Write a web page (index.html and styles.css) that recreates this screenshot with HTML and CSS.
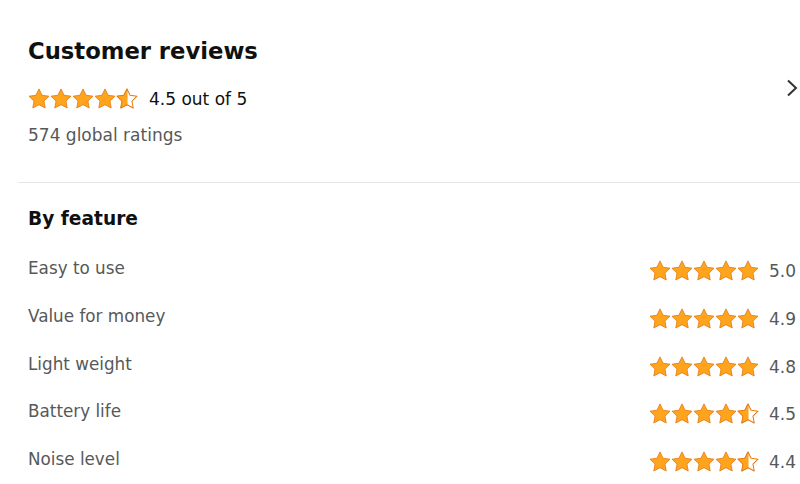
FILE: index.html
```html
<!DOCTYPE html>
<html lang="en">
<head>
<meta charset="utf-8">
<title>Customer reviews</title>
<link rel="stylesheet" href="styles.css">
</head>
<body>
<svg class="defs" width="0" height="0" aria-hidden="true">
  <defs>
    <path id="star-shape" d="M12 1 L15.35 7.9 L22.94 8.95 L17.41 14.26 L18.76 21.8 L12 18.2 L5.24 21.8 L6.59 14.26 L1.06 8.95 L8.65 7.9 Z"/>
    <clipPath id="half-clip"><rect x="0" y="0" width="12.6" height="24"/></clipPath>
  </defs>
</svg>
<main class="page">
  <section class="summary">
    <div class="summary-text">
      <h2 class="title">Customer reviews</h2>
      <div class="overall">
        <span class="stars">
          <svg class="star" viewBox="0 0 24 24"><use href="#star-shape" class="fill"/></svg>
          <svg class="star" viewBox="0 0 24 24"><use href="#star-shape" class="fill"/></svg>
          <svg class="star" viewBox="0 0 24 24"><use href="#star-shape" class="fill"/></svg>
          <svg class="star" viewBox="0 0 24 24"><use href="#star-shape" class="fill"/></svg>
          <svg class="star" viewBox="0 0 24 24"><use href="#star-shape" class="empty"/><use href="#star-shape" class="fill" clip-path="url(#half-clip)"/></svg>
        </span>
        <span class="overall-label">4.5 out of 5</span>
      </div>
      <p class="count">574 global ratings</p>
    </div>
    <svg class="chevron" viewBox="0 0 12 18"><polyline points="2,1.5 10,9 2,16.5"/></svg>
  </section>
  <hr class="divider">
  <section class="features">
    <h3 class="features-title">By feature</h3>
    <ul class="feature-list">
      <li class="feature">
        <span class="feature-name">Easy to use</span>
        <span class="feature-rating">
          <span class="stars">
            <svg class="star" viewBox="0 0 24 24"><use href="#star-shape" class="fill"/></svg>
            <svg class="star" viewBox="0 0 24 24"><use href="#star-shape" class="fill"/></svg>
            <svg class="star" viewBox="0 0 24 24"><use href="#star-shape" class="fill"/></svg>
            <svg class="star" viewBox="0 0 24 24"><use href="#star-shape" class="fill"/></svg>
            <svg class="star" viewBox="0 0 24 24"><use href="#star-shape" class="fill"/></svg>
          </span>
          <span class="score">5.0</span>
        </span>
      </li>
      <li class="feature">
        <span class="feature-name">Value for money</span>
        <span class="feature-rating">
          <span class="stars">
            <svg class="star" viewBox="0 0 24 24"><use href="#star-shape" class="fill"/></svg>
            <svg class="star" viewBox="0 0 24 24"><use href="#star-shape" class="fill"/></svg>
            <svg class="star" viewBox="0 0 24 24"><use href="#star-shape" class="fill"/></svg>
            <svg class="star" viewBox="0 0 24 24"><use href="#star-shape" class="fill"/></svg>
            <svg class="star" viewBox="0 0 24 24"><use href="#star-shape" class="fill"/></svg>
          </span>
          <span class="score">4.9</span>
        </span>
      </li>
      <li class="feature">
        <span class="feature-name">Light weight</span>
        <span class="feature-rating">
          <span class="stars">
            <svg class="star" viewBox="0 0 24 24"><use href="#star-shape" class="fill"/></svg>
            <svg class="star" viewBox="0 0 24 24"><use href="#star-shape" class="fill"/></svg>
            <svg class="star" viewBox="0 0 24 24"><use href="#star-shape" class="fill"/></svg>
            <svg class="star" viewBox="0 0 24 24"><use href="#star-shape" class="fill"/></svg>
            <svg class="star" viewBox="0 0 24 24"><use href="#star-shape" class="fill"/></svg>
          </span>
          <span class="score">4.8</span>
        </span>
      </li>
      <li class="feature">
        <span class="feature-name">Battery life</span>
        <span class="feature-rating">
          <span class="stars">
            <svg class="star" viewBox="0 0 24 24"><use href="#star-shape" class="fill"/></svg>
            <svg class="star" viewBox="0 0 24 24"><use href="#star-shape" class="fill"/></svg>
            <svg class="star" viewBox="0 0 24 24"><use href="#star-shape" class="fill"/></svg>
            <svg class="star" viewBox="0 0 24 24"><use href="#star-shape" class="fill"/></svg>
            <svg class="star" viewBox="0 0 24 24"><use href="#star-shape" class="empty"/><use href="#star-shape" class="fill" clip-path="url(#half-clip)"/></svg>
          </span>
          <span class="score">4.5</span>
        </span>
      </li>
      <li class="feature">
        <span class="feature-name">Noise level</span>
        <span class="feature-rating">
          <span class="stars">
            <svg class="star" viewBox="0 0 24 24"><use href="#star-shape" class="fill"/></svg>
            <svg class="star" viewBox="0 0 24 24"><use href="#star-shape" class="fill"/></svg>
            <svg class="star" viewBox="0 0 24 24"><use href="#star-shape" class="fill"/></svg>
            <svg class="star" viewBox="0 0 24 24"><use href="#star-shape" class="fill"/></svg>
            <svg class="star" viewBox="0 0 24 24"><use href="#star-shape" class="empty"/><use href="#star-shape" class="fill" clip-path="url(#half-clip)"/></svg>
          </span>
          <span class="score">4.4</span>
        </span>
      </li>
    </ul>
  </section>
</main>
</body>
</html>
```
FILE: styles.css
```css
* { box-sizing: border-box; }
html, body {
  margin: 0;
  padding: 0;
  background: #ffffff;
}
body {
  font-family: "DejaVu Sans", "Liberation Sans", sans-serif;
  color: #0f1111;
  width: 800px;
  height: 484px;
  overflow: hidden;
}
.defs {
  position: absolute;
  width: 0;
  height: 0;
}
.page {
  padding: 36px 0 0 18px;
}
.summary {
  display: flex;
  justify-content: space-between;
  align-items: flex-start;
  padding: 0 2px 0 10px;
}
.summary-text {
  display: flex;
  flex-direction: column;
}
.title {
  margin: 0;
  font-size: 22.7px;
  line-height: 30px;
  font-weight: bold;
  color: #0f1111;
}
.overall {
  display: flex;
  align-items: center;
  height: 24px;
  margin-top: 21px;
  gap: 11px;
}
.overall-label {
  font-size: 17px;
  line-height: 24px;
  color: #0f1111;
}
.count {
  margin: 12px 0 0;
  font-size: 17px;
  line-height: 24px;
  color: #565959;
}
.chevron {
  width: 12px;
  height: 18px;
  margin-top: 43px;
  fill: none;
  stroke: #333333;
  stroke-width: 2;
}
.stars {
  display: inline-flex;
  align-items: center;
}
.star {
  width: 22px;
  height: 22px;
  display: block;
}
.star .fill {
  fill: #ffa41c;
  stroke: #e47911;
  stroke-width: 0.9;
  stroke-linejoin: round;
}
.star .empty {
  fill: #ffffff;
  stroke: #e47911;
  stroke-width: 1.1;
  stroke-linejoin: round;
}
.divider {
  margin: 35px 0 0;
  border: 0;
  border-top: 1px solid #e7e7e7;
  height: 0;
}
.features {
  padding: 22px 4px 0 10px;
}
.features-title {
  margin: 0;
  font-size: 18.6px;
  line-height: 28px;
  font-weight: bold;
  color: #0f1111;
}
.feature-list {
  list-style: none;
  margin: 23px 0 0;
  padding: 0;
}
.feature {
  display: flex;
  justify-content: space-between;
  align-items: flex-start;
  height: 47.75px;
}
.feature-name {
  font-size: 16.8px;
  line-height: 24px;
  color: #565959;
}
.feature-rating {
  display: flex;
  align-items: center;
  gap: 10px;
  margin-top: 3px;
  height: 24px;
}
.score {
  font-size: 17px;
  line-height: 24px;
  color: #565959;
}
```
